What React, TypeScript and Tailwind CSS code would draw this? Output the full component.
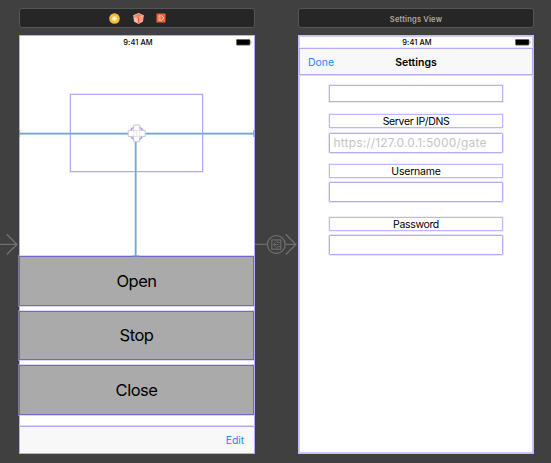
import type { ReactNode } from "react";

function StatusBar() {
  return (
    <div className="relative flex h-3 shrink-0 items-center justify-center text-[7.5px] leading-3 font-medium text-black">
      <span className="pt-px pl-[2px] tracking-[0.05px]">9:41 AM</span>
      <svg className="absolute top-[2.5px] right-[2.5px]" width="16" height="7" viewBox="0 0 16 7">
        <rect x="0.3" y="0.3" width="13.8" height="5.9" rx="1" fill="#000" stroke="#999" strokeWidth="0.6" />
        <path d="M15 2.2v2.2" stroke="#999" strokeWidth="1" />
      </svg>
    </div>
  );
}

function SceneBar({ children }: { children: ReactNode }) {
  return (
    <div className="flex h-5 items-center justify-center gap-[13px] rounded-[3px] border border-[#555] bg-[#262626]">
      {children}
    </div>
  );
}

function ActionButton({ label }: { label: string }) {
  return (
    <div className="flex h-[49.5px] shrink-0 items-center justify-center border border-[#7466c5] bg-[#aaa] pt-px text-[16.5px] tracking-[-0.5px] text-black shadow-[0_0_0_1px_#b9b0ef80]">
      {label}
    </div>
  );
}

function FieldLabel({ label, tight }: { label: string; tight?: boolean }) {
  return (
    <div
      className={`flex h-[14px] items-center justify-center border border-[#c1b6fd] pt-px text-[10.5px] leading-3 text-black shadow-[0_0_0_1px_#c1b6fd40] ${
        tight ? "tracking-[-0.35px]" : "tracking-[-0.2px]"
      }`}
    >
      {label}
    </div>
  );
}

function Field({ placeholder }: { placeholder?: string }) {
  return (
    <div className="flex h-5 items-center rounded-[1px] border border-[#b6aaf4] px-[3.5px] text-[12px] tracking-[0.16px] text-[#c5c5c7] shadow-[0_0_0_1px_#b6aaf450]">
      {placeholder}
    </div>
  );
}

function Constraints() {
  return (
    <svg className="absolute top-0 left-0" width="236" height="222" viewBox="0 0 236 222" fill="none">
      <path d="M0 98.7H235M116.7 106V221" stroke="#a9cbe7" strokeWidth="2.2" />
      <path d="M0 98.7H235M116.7 106V221M0.6 95v7M234.8 95v7M113.5 221h7" stroke="#659fd0" strokeWidth="1" />
      <circle cx="117.7" cy="98.3" r="6.7" fill="#fff" stroke="#a795ff" strokeWidth="1.4" />
      <path
        d="M114.7 90h6v5.4h5.5v6h-5.5v5.4h-6v-5.4h-5.5v-6h5.5z"
        fill="#fff"
        stroke="#c7c7c7"
        strokeWidth="1"
        strokeLinejoin="round"
      />
      <path d="M114.7 95.4h6v6h-6zM117.7 95.4v6" stroke="#ddd" strokeWidth="0.7" />
    </svg>
  );
}

function GateScene() {
  return (
    <section className="flex w-[236px] flex-col gap-[7px]">
      <SceneBar>
        <svg className="ml-px" width="11" height="11" viewBox="0 0 11 11">
          <circle cx="5.5" cy="5.5" r="5.3" fill="#f4bd32" />
          <circle cx="5.5" cy="5.5" r="2.5" fill="#fbe49e" />
          <rect x="4.7" y="4.7" width="1.6" height="1.6" fill="#fffbe9" />
        </svg>
        <svg className="-mr-px" width="11" height="11" viewBox="0 0 11 11">
          <path d="M5.5 0L10.8 2.2 10 8.5 5.5 11 1 8.5.2 2.2z" fill="#f5bfae" />
          <path d="M5.5.8L9.7 2.5 5.5 4.3 1.3 2.5z" fill="#f2805b" />
          <path d="M5.6 4.3v6" stroke="#e85c32" strokeWidth="1.6" />
          <path d="M7 4.6l3-1.3-.5 4.4L7 9.2z" fill="#f79b7c" />
          <path d="M1.1 3.3L4.9 4.9" stroke="#ef724a" strokeWidth="1" />
        </svg>
        <svg width="10" height="10" viewBox="0 0 10 10" fill="none">
          <rect x="0.5" y="0.5" width="9" height="9" rx="0.6" fill="#ef6535" />
          <path d="M3 2.8h2.9L7.8 5 5.9 7.2H3V5.9M3 4.1V2.8M2.4 5h2.9" stroke="#ffd6c4" strokeWidth="0.9" />
        </svg>
      </SceneBar>
      <div className="relative flex h-[419px] flex-col border border-[#b7aafa] bg-white">
        <StatusBar />
        <div className="mt-[46px] ml-[50px] h-[78px] w-[133px] shrink-0 border border-[#b5a5ff] shadow-[0_0_0_1px_#b5a5ff40]" />
        <div className="-ml-px mt-[84px] flex flex-col gap-[5px]">
          <ActionButton label="Open" />
          <ActionButton label="Stop" />
          <ActionButton label="Close" />
        </div>
        <div className="-mx-px mt-auto -mb-px flex h-[28px] items-center justify-end border border-[#b5a8f4] bg-[#f8f8f8] pt-px pr-[10px] text-[10.5px] tracking-[-0.1px] text-[#2886fa] shadow-[0_-1px_0_0_#d9d3fc]">
          Edit
        </div>
        <div className="absolute -top-px -left-px">
          <Constraints />
        </div>
      </div>
    </section>
  );
}

function SettingsScene() {
  return (
    <section className="flex w-[236px] flex-col gap-[7px]">
      <SceneBar>
        <span className="pt-[3px] text-[7.5px] font-semibold tracking-[0.2px] text-[#aaa]">Settings View</span>
      </SceneBar>
      <div className="flex h-[419px] flex-col border border-[#c5bcfc] bg-white shadow-[inset_0_0_0_1px_#d2cafd]">
        <StatusBar />
        <div className="grid h-[27px] shrink-0 grid-cols-3 items-center border border-[#b6aaf4] bg-[#f8f8f8] px-[8px] pt-[2px] shadow-[0_1px_0_0_#ddd8fb,0_-1px_0_0_#ebe7ff]">
          <span className="text-[10.5px] tracking-[-0.05px] text-[#2886fa]">Done</span>
          <span className="text-center text-[10.5px] font-semibold text-black">Settings</span>
        </div>
        <div className="mx-[30px] flex flex-col pt-[10px]">
          <div className="h-[17px] border border-[#b9adf9] shadow-[0_0_0_1px_#b9adf940]" />
          <div className="mt-3 flex flex-col gap-[5px]">
            <FieldLabel label="Server IP/DNS" tight />
            <Field placeholder="https://127.0.0.1:5000/gate" />
          </div>
          <div className="mt-[11px] flex flex-col gap-1">
            <FieldLabel label="Username" />
            <Field />
          </div>
          <div className="mt-[15px] flex flex-col gap-1">
            <FieldLabel label="Password" tight />
            <Field />
          </div>
        </div>
      </div>
    </section>
  );
}

function Segue() {
  return (
    <svg className="mt-[226px] shrink-0" width="43" height="22" viewBox="0 0 43 22" fill="none" stroke="#6d6d6d">
      <path d="M0 10.4H12M30.5 10.4H41M30.7.2l10.2 10.2L30.7 20.6" strokeWidth="1.4" />
      <circle cx="21.3" cy="10.6" r="8.9" strokeWidth="1.3" />
      <rect x="16.8" y="5.9" width="9" height="9.3" strokeWidth="1.1" />
      <path d="M21.8 6v2.2M21.8 13v2.2M25.8 8.4h-3.4M25.8 12.6h-3.4M18.4 10.5h5M20.7 8.4l-2.3 2.1 2.3 2.1" strokeWidth="0.9" />
    </svg>
  );
}

export default function App() {
  return (
    <main className="flex h-[463px] w-[551px] items-start overflow-hidden bg-[#404040] pt-2 font-['Inter','Liberation_Sans',sans-serif]">
      <svg className="mt-[226px] shrink-0" width="19" height="22" viewBox="0 0 19 22" fill="none" stroke="#707070" strokeWidth="1.4">
        <path d="M0 10.4H17M6.7.2l10.2 10.2L6.7 20.6" />
      </svg>
      <GateScene />
      <Segue />
      <SettingsScene />
    </main>
  );
}
